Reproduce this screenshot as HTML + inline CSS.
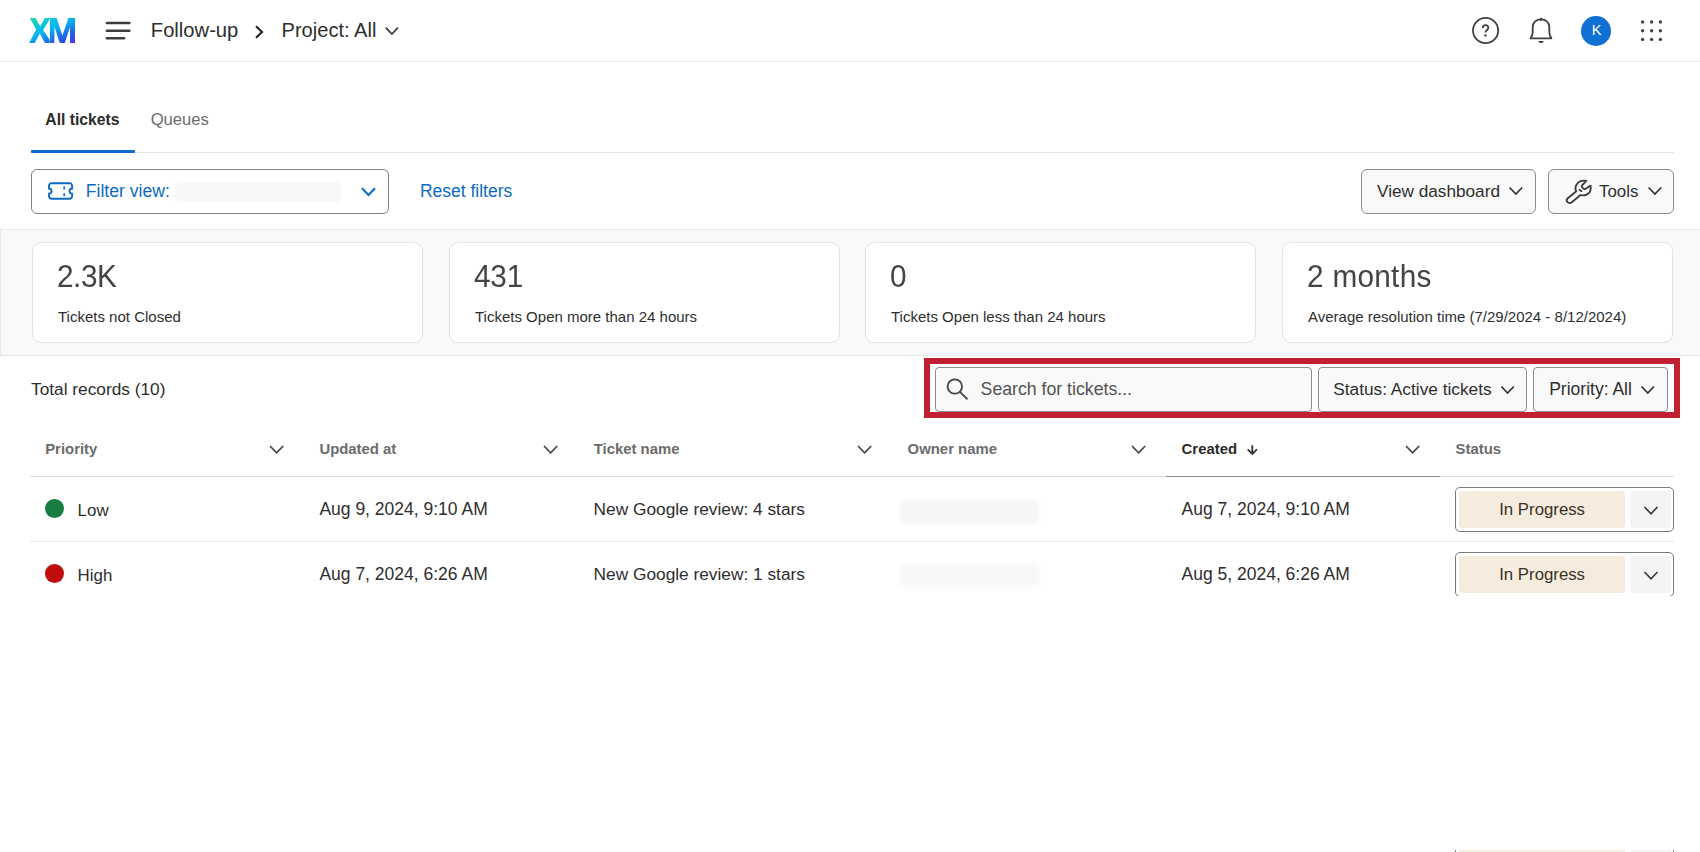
<!DOCTYPE html>
<html><head><meta charset="utf-8">
<style>
*{box-sizing:border-box;margin:0;padding:0}
html,body{width:1700px;height:852px;overflow:hidden;background:#fff;font-family:"Liberation Sans",sans-serif;color:#2f2f2f}
.a{position:absolute;line-height:1;white-space:nowrap}
svg{position:absolute;overflow:visible}
.hl{position:absolute;height:1px}
.btn{position:absolute;border:1px solid #8c8c8c;border-radius:6px;background:#f9f9f9}
.card{position:absolute;top:242px;width:391px;height:101px;background:#fff;border:1px solid #e3e3e3;border-radius:9px}
.num{position:absolute;left:23.6px;top:17px;font-size:32px;line-height:1;color:#444;white-space:nowrap;transform:scaleX(0.93);transform-origin:0 0}
.lbl{position:absolute;left:25px;top:66px;font-size:15px;line-height:1;color:#2e2e2e;white-space:nowrap}
.th{position:absolute;top:442px;font-size:14.9px;font-weight:700;color:#6b6b6b;line-height:1;white-space:nowrap}
.td{position:absolute;font-size:17.3px;line-height:1;color:#2e2e2e;white-space:nowrap}
</style></head><body>

<!-- HEADER -->
<svg style="left:29px;top:18px" width="46" height="25" viewBox="0 0 46 25">
<defs><linearGradient id="xg" x1="0" y1="0" x2="18" y2="40" gradientUnits="userSpaceOnUse">
<stop offset="0" stop-color="#2ad8a0"/><stop offset="0.25" stop-color="#0cc6de"/><stop offset="0.45" stop-color="#08b2f2"/><stop offset="0.62" stop-color="#1a7ce6"/><stop offset="0.8" stop-color="#2854e0"/><stop offset="1" stop-color="#6a2ee8"/></linearGradient></defs>
<polygon fill="url(#xg)" points="0.8,0 6.6,0 11.2,8.2 15.9,0 20.65,0 20.65,1.4 14.1,11.9 20.65,21.7 20.65,25 15.9,25 10.8,15.5 5.7,25 0.1,25 7.2,11.6"/>
<polygon fill="url(#xg)" points="20.9,0 27.6,0 33.4,17.4 39.4,0 46,0 46,25 41,25 41,9 35.8,25 30.8,25 25.4,8.5 25.4,25 20.9,25"/>
</svg>
<svg style="left:104px;top:20px" width="28" height="21" viewBox="0 0 28 21">
<g stroke="#3d3d3d" stroke-width="2.6" stroke-linecap="round"><line x1="2.9" y1="3" x2="25.3" y2="3"/><line x1="2.9" y1="10.7" x2="25.3" y2="10.7"/><line x1="2.9" y1="18.2" x2="20" y2="18.2"/></g>
</svg>
<div class="a" style="left:150.8px;top:20px;font-size:20.2px;color:#2e2e2e">Follow-up</div>
<svg style="left:252px;top:24px" width="14" height="16" viewBox="0 0 14 16"><path d="M4 2.2 L10 8 L4 13.8" fill="none" stroke="#222" stroke-width="2.2"/></svg>
<div class="a" style="left:281.5px;top:20px;font-size:20.1px;color:#2e2e2e">Project: All</div>
<svg style="left:384px;top:25px" width="16" height="12" viewBox="0 0 16 12"><path d="M1.8 2.6 L7.9 9 L14 2.6" fill="none" stroke="#3a3a3a" stroke-width="1.7"/></svg>

<svg style="left:1470px;top:15px" width="32" height="32" viewBox="0 0 32 32">
<circle cx="15.6" cy="15.5" r="12.6" fill="none" stroke="#404040" stroke-width="1.8"/>
<path d="M12.9 12.9 C12.9 11.2 14.1 10.2 15.6 10.2 C17.2 10.2 18.3 11.2 18.3 12.8 C18.3 14.8 15.5 15.2 15.5 17.5" fill="none" stroke="#404040" stroke-width="1.8"/>
<circle cx="15.5" cy="20.4" r="1.2" fill="#404040"/>
</svg>
<svg style="left:1526px;top:15px" width="30" height="32" viewBox="0 0 30 32">
<path d="M4.6 23.3 L25.4 23.3 C24 21.5 23.3 19.5 23.3 17 L23.3 12 C23.3 7.2 19.6 4.3 15 4.3 C10.4 4.3 6.7 7.2 6.7 12 L6.7 17 C6.7 19.5 6 21.5 4.6 23.3 Z" fill="none" stroke="#404040" stroke-width="1.8" stroke-linejoin="round"/>
<circle cx="15" cy="4.3" r="1.5" fill="#404040"/>
<path d="M12.4 26 L17.6 26 C17.3 27.4 16.3 28.1 15 28.1 C13.7 28.1 12.7 27.4 12.4 26 Z" fill="#404040"/>
</svg>
<div class="a" style="left:1581px;top:15.5px;width:30px;height:30px;border-radius:50%;background:#1070d4"></div>
<div class="a" style="left:1581.7px;top:23px;width:30px;text-align:center;font-size:14.6px;color:#fff">K</div>
<svg style="left:1638px;top:18px" width="28" height="26" viewBox="0 0 28 26">
<g fill="#444"><circle cx="4.6" cy="4" r="1.7"/><circle cx="13.6" cy="4" r="1.7"/><circle cx="22.4" cy="4" r="1.7"/>
<circle cx="4.6" cy="12.7" r="1.7"/><circle cx="13.6" cy="12.7" r="1.7"/><circle cx="22.4" cy="12.7" r="1.7"/>
<circle cx="4.6" cy="21.4" r="1.7"/><circle cx="13.6" cy="21.4" r="1.7"/><circle cx="22.4" cy="21.4" r="1.7"/></g>
</svg>
<div class="hl" style="left:0;top:61px;width:1700px;background:#e8e8e8"></div>

<!-- TABS -->
<div class="a" style="left:45.3px;top:112px;font-size:15.7px;font-weight:700;color:#2b2b2b">All tickets</div>
<div class="a" style="left:150.7px;top:112px;font-size:16.6px;color:#6b6b6b">Queues</div>
<div class="hl" style="left:30px;top:152px;width:1644px;background:#e3e3e3"></div>
<div class="a" style="left:31px;top:150px;width:104px;height:3px;background:#0b6bcc;border-radius:1px"></div>

<!-- FILTER ROW -->
<div class="btn" style="left:31px;top:169px;width:358px;height:45px;background:#fff;border-color:#808080"></div>
<svg style="left:46px;top:180px" width="28" height="22" viewBox="0 0 28 22">
<path d="M5.6 3.2 H23.5 A2.5 2.5 0 0 1 26.1 5.7 V8.5 A2.6 2.6 0 0 0 26.1 13.7 V16.2 A2.5 2.5 0 0 1 23.5 18.7 H5.6 A2.5 2.5 0 0 1 3 16.2 V13.7 A2.6 2.6 0 0 0 3 8.5 V5.7 A2.5 2.5 0 0 1 5.6 3.2 Z" fill="none" stroke="#0b6bc4" stroke-width="1.9"/>
<line x1="18.2" y1="6.4" x2="18.2" y2="9.4" stroke="#0b6bc4" stroke-width="1.7"/><line x1="18.2" y1="13.3" x2="18.2" y2="16.1" stroke="#0b6bc4" stroke-width="1.7"/>
</svg>
<div class="a" style="left:85.8px;top:183px;font-size:17.6px;color:#0b6bc4">Filter view:</div>
<div class="a" style="left:175px;top:182px;width:166px;height:20px;background:#f6f7f8;border-radius:3px;filter:blur(1px)"></div>
<svg style="left:359px;top:185px" width="19" height="14" viewBox="0 0 19 14"><path d="M3 3.3 L9.5 10 L16 3.3" fill="none" stroke="#0b6bc4" stroke-width="2"/></svg>
<div class="a" style="left:419.9px;top:183px;font-size:17.5px;color:#0b6bc4">Reset filters</div>

<div class="btn" style="left:1361px;top:169px;width:175px;height:45px"></div>
<div class="a" style="left:1377px;top:183px;font-size:17.2px;color:#2e2e2e">View dashboard</div>
<svg style="left:1507px;top:184px" width="18" height="14" viewBox="0 0 18 14"><path d="M2.6 3.5 L8.9 10 L15.2 3.5" fill="none" stroke="#333" stroke-width="1.7"/></svg>
<div class="btn" style="left:1548px;top:169px;width:126px;height:45px"></div>
<svg style="left:1560px;top:175px" width="40" height="33" viewBox="0 0 40 33">
<path d="M16.3 16.3 C15.2 14.5 15.3 11.5 16.8 9.2 C18.6 6.5 22.5 5.2 26.4 5.9 L21.8 10.6 C21.6 12.5 23.5 14.3 25.3 14.1 L30.6 10.6 C31.3 14.5 29.8 18 26.5 19.6 C24.5 20.6 22.5 20.6 20.5 20 L11.8 27.2 C10.5 28.3 8.5 28.3 7.5 27.2 C6.4 26.1 6.4 24.6 7.5 23.5 Z" fill="none" stroke="#3a3a3a" stroke-width="1.8" stroke-linejoin="round"/>
<path d="M19.5 14.8 L21.5 16.2" stroke="#3a3a3a" stroke-width="1.7" stroke-linecap="round"/>
</svg>
<div class="a" style="left:1599px;top:184px;font-size:16.9px;color:#2e2e2e">Tools</div>
<svg style="left:1646px;top:184px" width="18" height="14" viewBox="0 0 18 14"><path d="M2.6 3.5 L8.9 10 L15.2 3.5" fill="none" stroke="#333" stroke-width="1.7"/></svg>

<!-- STATS -->
<div class="a" style="left:0;top:229px;width:1700px;height:127px;background:#f9f9f9;border-top:1px solid #e6e6e6;border-bottom:1px solid #e6e6e6;border-left:1px solid #e6e6e6"></div>
<div class="card" style="left:32px"><div class="num" style="letter-spacing:-0.5px">2.3K</div><div class="lbl">Tickets not Closed</div></div>
<div class="card" style="left:449px"><div class="num" style="letter-spacing:-0.2px">431</div><div class="lbl">Tickets Open more than 24 hours</div></div>
<div class="card" style="left:865px"><div class="num">0</div><div class="lbl">Tickets Open less than 24 hours</div></div>
<div class="card" style="left:1282px"><div class="num" style="letter-spacing:0.3px">2 months</div><div class="lbl">Average resolution time (7/29/2024 - 8/12/2024)</div></div>

<!-- SEARCH ROW -->
<div class="a" style="left:31px;top:381px;font-size:17.3px;color:#2e2e2e">Total records (10)</div>
<div class="a" style="left:924px;top:358px;width:756px;height:60px;border:6px solid #c21f30"></div>
<div class="btn" style="left:935px;top:367px;width:377px;height:45px;border-radius:4px"></div>
<svg style="left:943px;top:375px" width="28" height="28" viewBox="0 0 28 28">
<circle cx="11.8" cy="11.5" r="7.2" fill="none" stroke="#444" stroke-width="1.8"/><line x1="17" y1="16.9" x2="24.5" y2="24.4" stroke="#444" stroke-width="1.8"/>
</svg>
<div class="a" style="left:980.6px;top:381px;font-size:17.7px;color:#525252">Search for tickets...</div>
<div class="btn" style="left:1318px;top:367px;width:209px;height:45px;border-radius:4px"></div>
<div class="a" style="left:1333.2px;top:381px;font-size:17.3px;color:#2e2e2e">Status: Active tickets</div>
<svg style="left:1499px;top:382.6px" width="18" height="14" viewBox="0 0 18 14"><path d="M2.4 3.5 L8.6 10 L14.8 3.5" fill="none" stroke="#333" stroke-width="1.7"/></svg>
<div class="btn" style="left:1533px;top:367px;width:135px;height:45px;border-radius:4px"></div>
<div class="a" style="left:1549.2px;top:381px;font-size:17.5px;color:#2e2e2e">Priority: All</div>
<svg style="left:1639px;top:382.6px" width="18" height="14" viewBox="0 0 18 14"><path d="M2.6 3.5 L8.8 10 L15 3.5" fill="none" stroke="#333" stroke-width="1.7"/></svg>

<!-- TABLE HEADER -->
<div class="th" style="left:45.2px">Priority</div>
<div class="th" style="left:319.4px">Updated at</div>
<div class="th" style="left:593.7px">Ticket name</div>
<div class="th" style="left:907.6px">Owner name</div>
<div class="th" style="left:1181.6px;color:#2b2b2b">Created</div>
<div class="th" style="left:1455.5px">Status</div>
<svg style="left:268px;top:442px" width="18" height="14" viewBox="0 0 18 14"><path d="M2 4 L8.6 10.8 L15.2 4" fill="none" stroke="#444" stroke-width="1.7"/></svg>
<svg style="left:542px;top:442px" width="18" height="14" viewBox="0 0 18 14"><path d="M2 4 L8.6 10.8 L15.2 4" fill="none" stroke="#444" stroke-width="1.7"/></svg>
<svg style="left:856px;top:442px" width="18" height="14" viewBox="0 0 18 14"><path d="M2 4 L8.6 10.8 L15.2 4" fill="none" stroke="#444" stroke-width="1.7"/></svg>
<svg style="left:1130px;top:442px" width="18" height="14" viewBox="0 0 18 14"><path d="M2 4 L8.6 10.8 L15.2 4" fill="none" stroke="#444" stroke-width="1.7"/></svg>
<svg style="left:1404px;top:442px" width="18" height="14" viewBox="0 0 18 14"><path d="M2 4 L8.6 10.8 L15.2 4" fill="none" stroke="#444" stroke-width="1.7"/></svg>
<svg style="left:1244px;top:441px" width="16" height="18" viewBox="0 0 16 18"><path d="M8.3 4.2 V12.9 M3.7 8.3 L8.3 12.9 L12.9 8.3" fill="none" stroke="#333" stroke-width="1.8"/></svg>
<div class="hl" style="left:30px;top:476px;width:1644px;background:#dcdcdc"></div>
<div class="a" style="left:1166px;top:476px;width:274px;height:1px;background:#8c8c8c"></div>

<!-- ROWS -->
<div class="a" style="left:0;top:477px;width:1700px;height:119px;overflow:hidden">
 <div class="hl" style="left:30px;top:64px;width:1644px;background:#e6e6e6"></div>
 <!-- row 1 -->
 <div class="a" style="left:45.2px;top:22.2px;width:18.8px;height:18.8px;border-radius:50%;background:#177d40"></div>
 <div class="td" style="left:77.6px;top:26px;font-size:16.9px">Low</div>
 <div class="td" style="left:319.4px;top:24px;font-size:17.5px">Aug 9, 2024, 9:10 AM</div>
 <div class="td" style="left:593.6px;top:24px">New Google review: 4 stars</div>
 <div class="a" style="left:900px;top:23px;width:139px;height:24px;background:#f6f6f6;border-radius:4px;filter:blur(1.5px)"></div>
 <div class="td" style="left:1181.5px;top:24px;font-size:17.5px">Aug 7, 2024, 9:10 AM</div>
 <div class="a" style="left:1455px;top:10px;width:219px;height:45px;border:1px solid #7a7a7a;border-radius:5px;background:#fff"></div>
 <div class="a" style="left:1458.6px;top:14px;width:166.4px;height:37px;background:#f5ecdd;border-radius:3px"></div>
 <div class="a" style="left:1630px;top:14px;width:40.5px;height:37px;background:#f4f4f4;border-radius:3px"></div>
 <div class="td" style="left:1499.2px;top:25px;font-size:16.8px;color:#3a3226">In Progress</div>
 <svg style="left:1642px;top:27px" width="18" height="14" viewBox="0 0 18 14"><path d="M2.5 3 L9 9.8 L15.5 3" fill="none" stroke="#3d3d3d" stroke-width="1.7"/></svg>
 <!-- row 2 -->
 <div class="a" style="left:45.2px;top:87.2px;width:18.8px;height:18.8px;border-radius:50%;background:#c00d0d"></div>
 <div class="td" style="left:77.6px;top:91px;font-size:16.9px">High</div>
 <div class="td" style="left:319.4px;top:89px;font-size:17.5px">Aug 7, 2024, 6:26 AM</div>
 <div class="td" style="left:593.6px;top:89px">New Google review: 1 stars</div>
 <div class="a" style="left:900px;top:88px;width:139px;height:21px;background:#f7f7f7;border-radius:4px;filter:blur(2px)"></div>
 <div class="td" style="left:1181.5px;top:89px;font-size:17.5px">Aug 5, 2024, 6:26 AM</div>
 <div class="a" style="left:1455px;top:75px;width:219px;height:45px;border:1px solid #7a7a7a;border-radius:5px;background:#fff"></div>
 <div class="a" style="left:1458.6px;top:79px;width:166.4px;height:37px;background:#f5ecdd;border-radius:3px"></div>
 <div class="a" style="left:1630px;top:79px;width:40.5px;height:37px;background:#f4f4f4;border-radius:3px"></div>
 <div class="td" style="left:1499.2px;top:90px;font-size:16.8px;color:#3a3226">In Progress</div>
 <svg style="left:1642px;top:92px" width="18" height="14" viewBox="0 0 18 14"><path d="M2.5 3 L9 9.8 L15.5 3" fill="none" stroke="#3d3d3d" stroke-width="1.7"/></svg>
</div>

<!-- bottom sliver -->
<div class="a" style="left:1455px;top:850px;width:219px;height:2px;border-left:1px solid #7a7a7a;border-right:1px solid #7a7a7a"></div>
<div class="a" style="left:1458.6px;top:850px;width:166.4px;height:2px;background:#f5ecdd"></div>
<div class="a" style="left:1630px;top:850px;width:40.5px;height:2px;background:#f4f4f4"></div>
</body></html>
